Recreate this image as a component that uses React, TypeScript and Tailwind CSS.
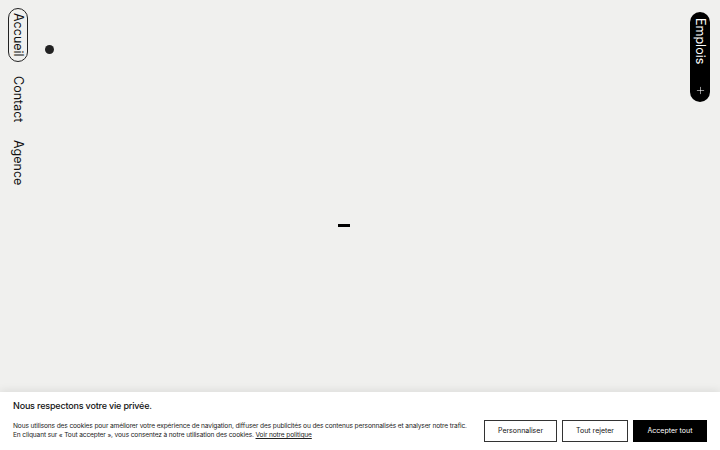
import { Plus } from "lucide-react";

const navItems = ["Contact", "Agence"];

function VText({ children }: { children: string }) {
  return <span className="whitespace-nowrap text-[12.5px] leading-[14px] [writing-mode:vertical-rl]">{children}</span>;
}

export default function App() {
  return (
    <div className="relative h-[450px] w-[720px] overflow-hidden bg-[#f0f0ee] font-['Inter',sans-serif] text-[#111]">
      <div className="flex h-full">
        {/* Left nav */}
        <nav className="flex flex-col items-start gap-[10px] pl-[8px] pt-[8px]">
          <a className="flex w-[20px] justify-center rounded-full border border-[#222] py-[4px]">
            <VText>Accueil</VText>
          </a>
          {navItems.map((item) => (
            <a key={item} className="flex w-[20px] justify-center py-[4px]">
              <VText>{item}</VText>
            </a>
          ))}
        </nav>

        <div className="flex flex-1 items-center justify-center">
          <span className="mr-[30px] h-[3px] w-[12px] bg-black" />
        </div>

        {/* Right pill */}
        <div className="pr-[10px] pt-[12px]">
          <a className="flex h-[90px] w-[20px] flex-col items-center justify-between rounded-full bg-black pb-[6px] pt-[6px] text-white">
            <VText>Emplois</VText>
            <Plus size={11} strokeWidth={1.25} />
          </a>
        </div>
      </div>

      {/* cursor dot */}
      <span className="absolute left-[45px] top-[45px] h-[9px] w-[9px] rounded-full bg-[#222]" />

      {/* Cookie banner */}
      <div className="absolute inset-x-0 bottom-0 flex h-[58px] items-end justify-between bg-white pb-[9px] pl-[13px] pr-[13px] shadow-[0_-2px_8px_rgba(0,0,0,0.08)]">
        <div className="flex flex-col">
          <p className="mb-[10px] text-[9px] font-medium leading-[12px] tracking-[-0.02em]">Nous respectons votre vie privée.</p>
          <p className="mb-[1px] text-[6.6px] leading-[9px] tracking-[-0.02em] text-[#222]">
            Nous utilisons des cookies pour améliorer votre expérience de navigation, diffuser des publicités ou des contenus personnalisés et analyser notre trafic.
            <br />
            En cliquant sur « Tout accepter », vous consentez à notre utilisation des cookies.{" "}
            <a className="underline">Voir notre politique</a>
          </p>
        </div>
        <div className="mb-[-1px] flex gap-[5px] text-[7px]">
          <button className="h-[22px] w-[73px] border border-[#333] bg-white">Personnaliser</button>
          <button className="h-[22px] w-[66px] border border-[#333] bg-white">Tout rejeter</button>
          <button className="h-[22px] w-[74px] bg-black text-white">Accepter tout</button>
        </div>
      </div>
    </div>
  );
}
